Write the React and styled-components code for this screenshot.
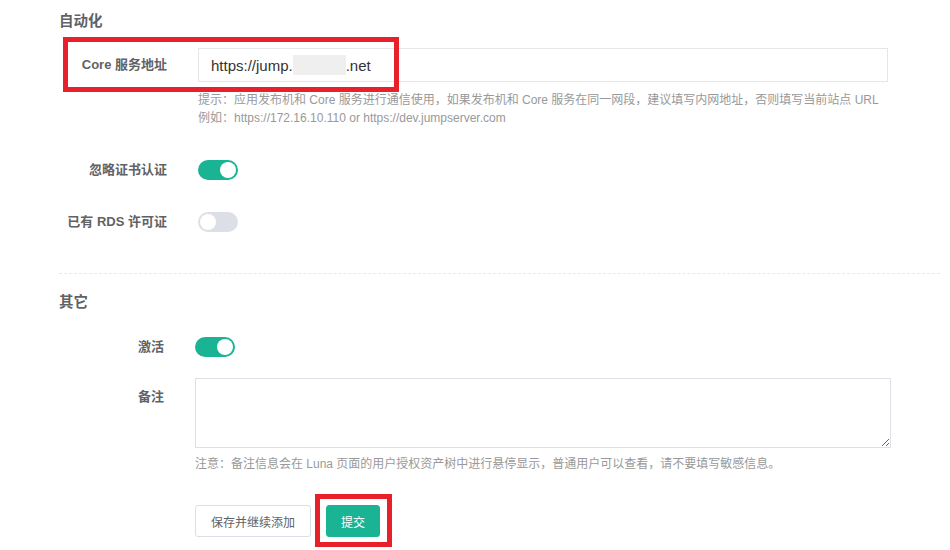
import React from "react";
import styled, { createGlobalStyle, css } from "styled-components";

const GlobalStyle = createGlobalStyle`
  html, body {
    margin: 0;
    padding: 0;
    background: #fff;
  }
  body {
    font-family: "Liberation Sans", "Noto Sans CJK SC", sans-serif;
    color: #606266;
  }
`;

const Page = styled.div`
  width: 950px;
  height: 550px;
  box-sizing: border-box;
  padding: 11px 10px 0 59px;
  overflow: hidden;
`;

const Section = styled.div`
  display: flex;
  flex-direction: column;
  ${({ divided }) =>
    divided &&
    css`
      border-top: 1px dashed #e7eaec;
      margin-top: 41px;
      padding-top: 18px;
    `}
`;

const Title = styled.div`
  font-size: 14.5px;
  font-weight: bold;
  line-height: 20px;
  color: #5f6266;
  margin-bottom: ${({ gap }) => gap}px;
`;

const Row = styled.div`
  position: relative;
  display: flex;
  align-items: ${({ top }) => (top ? "flex-start" : "center")};
  margin-bottom: ${({ gap }) => gap || 0}px;
`;

const Label = styled.label`
  flex: none;
  width: ${({ width }) => width}px;
  box-sizing: border-box;
  padding-right: 31px;
  text-align: right;
  font-size: 13px;
  font-weight: bold;
  line-height: 20px;
  color: #5f6266;
  ${({ top }) =>
    top &&
    css`
      padding-top: 9px;
    `}
`;

const Field = styled.div`
  flex: 1;
  display: flex;
  flex-direction: column;
  padding-right: ${({ right }) => right}px;
`;

const TextInput = styled.div`
  height: 34px;
  box-sizing: border-box;
  border: 1px solid #e5e6e7;
  display: flex;
  align-items: center;
  padding: 0 12px;
  font-size: 15px;
  color: #333;
`;

const Blur = styled.span`
  display: inline-block;
  width: 53px;
  height: 20px;
  background: #efefef;
`;

const Help = styled.div`
  font-size: 12px;
  line-height: 18px;
  color: #999;
  margin-top: ${({ mt }) => mt}px;
`;

const Track = styled.span`
  position: relative;
  display: inline-block;
  width: 40px;
  height: 20px;
  border-radius: 10px;
  background: ${({ on }) => (on ? "#1ab394" : "#dcdfe6")};

  &::after {
    content: "";
    position: absolute;
    top: 2px;
    left: ${({ on }) => (on ? "22px" : "2px")};
    width: 16px;
    height: 16px;
    border-radius: 50%;
    background: #fff;
  }
`;

const Memo = styled.textarea`
  display: block;
  height: 70px;
  box-sizing: border-box;
  border: 1px solid #dcdfe6;
  border-radius: 0;
  margin: 0;
  resize: vertical;
  font-family: inherit;
  outline: none;
`;

const Actions = styled.div`
  display: flex;
  gap: 15px;
  margin-top: 32px;
`;

const Button = styled.button`
  height: 32px;
  box-sizing: border-box;
  border-radius: 3px;
  padding: 0 ${({ primary }) => (primary ? 14 : 15)}px;
  font-family: inherit;
  font-size: 12px;
  cursor: pointer;
  ${({ primary }) =>
    primary
      ? css`
          border: 1px solid #1ab394;
          background: #1ab394;
          color: #fff;
        `
      : css`
          border: 1px solid #dcdfe6;
          background: #fff;
          color: #606266;
        `}
`;

// red annotation frames drawn over the screenshot
const Marked = styled.span`
  position: relative;
  display: inline-flex;

  &::after {
    content: "";
    position: absolute;
    top: -11px;
    right: -12px;
    bottom: -10px;
    left: -11px;
    border: 5px solid #e8202a;
    pointer-events: none;
  }
`;

const RowMark = styled.div`
  position: absolute;
  left: 4px;
  top: -11px;
  width: 336px;
  height: 55px;
  box-sizing: border-box;
  border: 5px solid #e8202a;
  pointer-events: none;
`;

export default function App() {
  return (
    <>
      <GlobalStyle />
      <Page>
        <Section>
          <Title gap={17}>自动化</Title>
          <Row>
            <Label width={139}>Core 服务地址</Label>
            <Field right={52}>
              <TextInput>
                https://jump.<Blur />.net
              </TextInput>
            </Field>
            <RowMark />
          </Row>
          <Row gap={33}>
            <Label width={139} />
            <Field right={52}>
              <Help mt={9}>
                提示：应用发布机和 Core 服务进行通信使用，如果发布机和 Core 服务在同一网段，建议填写内网地址，否则填写当前站点 URL
                <br />
                例如：https://172.16.10.110 or https://dev.jumpserver.com
              </Help>
            </Field>
          </Row>
          <Row gap={32}>
            <Label width={139}>忽略证书认证</Label>
            <Track on />
          </Row>
          <Row>
            <Label width={139}>已有 RDS 许可证</Label>
            <Track />
          </Row>
        </Section>

        <Section divided>
          <Title gap={25}>其它</Title>
          <Row gap={21}>
            <Label width={136}>激活</Label>
            <Track on />
          </Row>
          <Row top>
            <Label width={136} top>
              备注
            </Label>
            <Field right={49}>
              <Memo />
              <Help mt={7}>
                注意：备注信息会在 Luna 页面的用户授权资产树中进行悬停显示，普通用户可以查看，请不要填写敏感信息。
              </Help>
              <Actions>
                <Button>保存并继续添加</Button>
                <Marked>
                  <Button primary>提交</Button>
                </Marked>
              </Actions>
            </Field>
          </Row>
        </Section>
      </Page>
    </>
  );
}
